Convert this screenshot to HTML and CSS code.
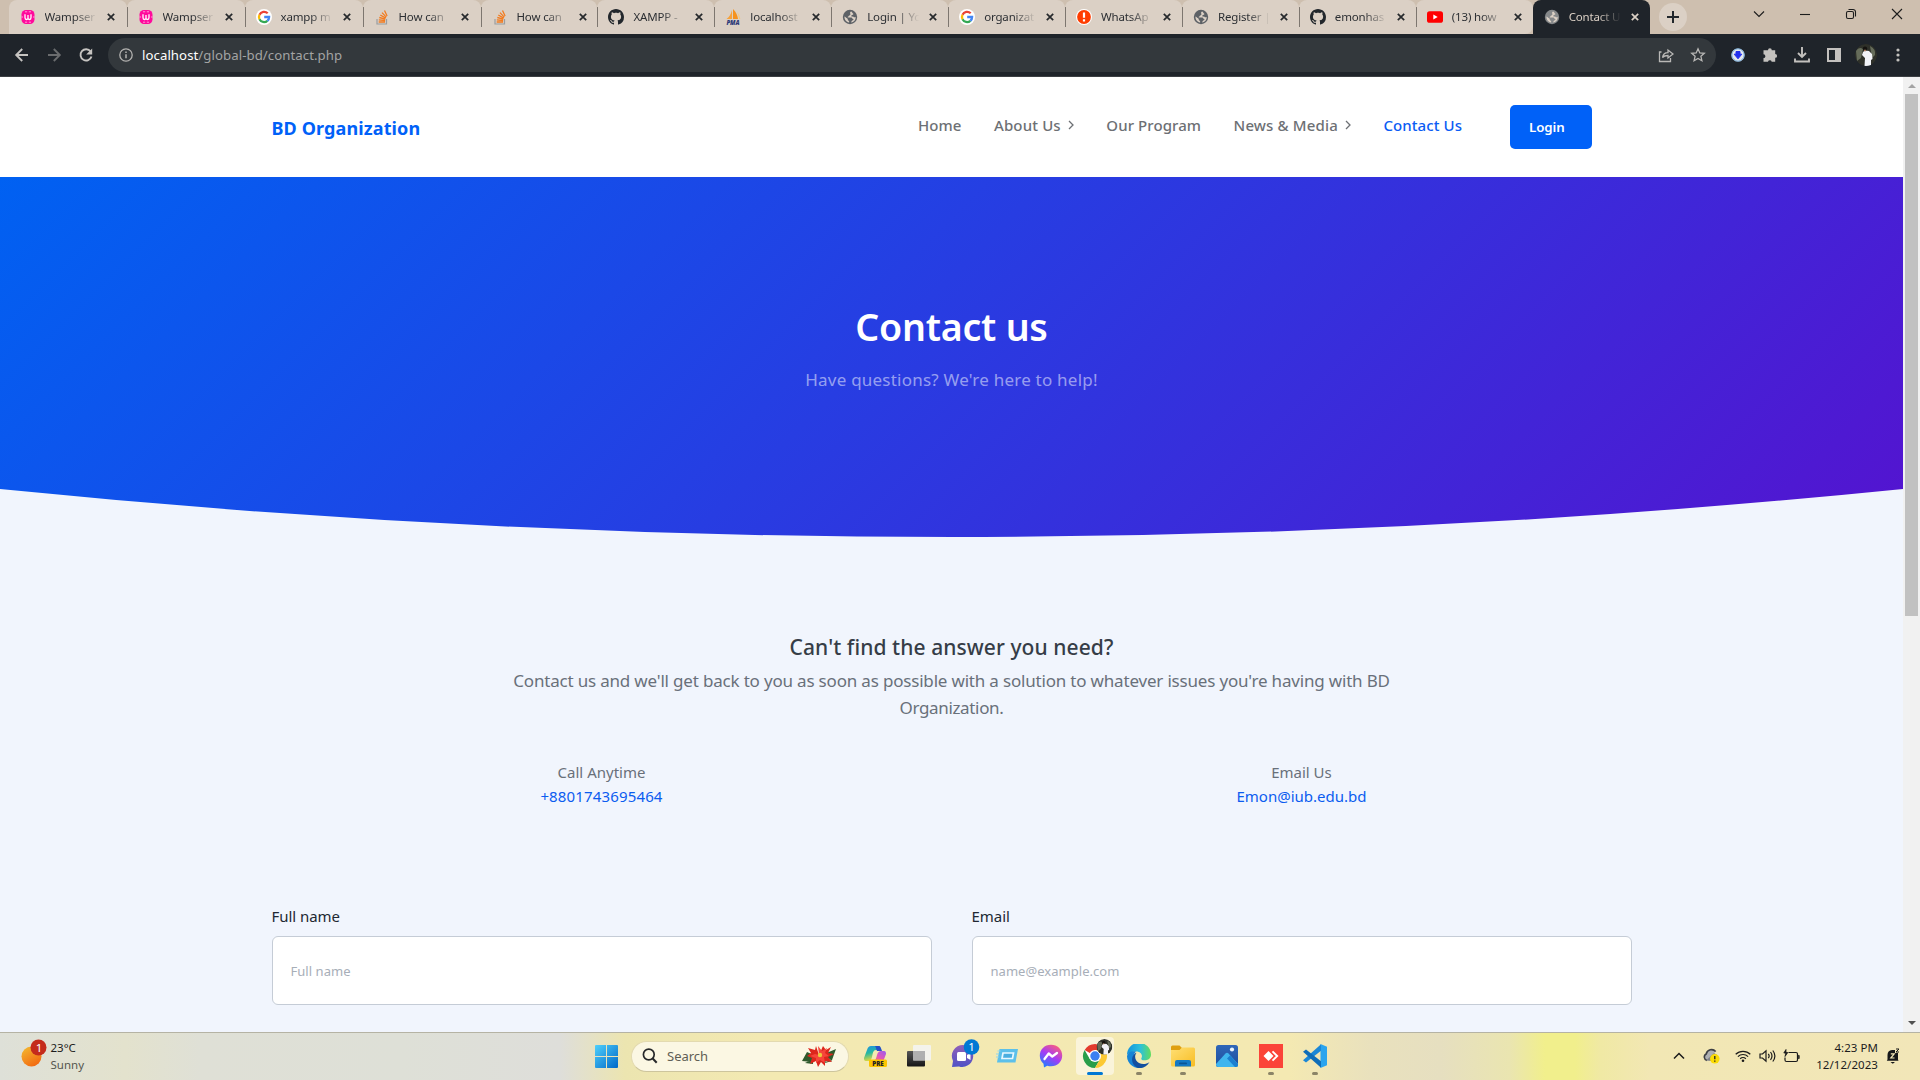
FILE: index.html
```html
<!DOCTYPE html>
<html lang="en">
<head>
<meta charset="utf-8">
<title>Contact Us</title>
<link rel="stylesheet" href="styles.css">
</head>
<body>
<svg class="defs" aria-hidden="true">
  <defs>
    <linearGradient id="gWin" x1="0" y1="0" x2="1" y2="1"><stop offset="0" stop-color="#4fd0fb"/><stop offset="1" stop-color="#0068c8"/></linearGradient>
    <linearGradient id="gSun" x1="0.2" y1="0" x2="0.8" y2="1"><stop offset="0" stop-color="#f3b62f"/><stop offset="1" stop-color="#f2640f"/></linearGradient>
    <linearGradient id="gCopA" x1="0" y1="0" x2="0.3" y2="1"><stop offset="0" stop-color="#1f8fe8"/><stop offset=".5" stop-color="#25b8a0"/><stop offset="1" stop-color="#e8d93a"/></linearGradient>
    <linearGradient id="gCopB" x1="1" y1="0" x2="0" y2="1"><stop offset="0" stop-color="#9a5cf0"/><stop offset=".5" stop-color="#e255b8"/><stop offset="1" stop-color="#f98a4a"/></linearGradient>
    <linearGradient id="gMsg" x1="0.2" y1="1" x2="0.8" y2="0"><stop offset="0" stop-color="#1a82ff"/><stop offset=".5" stop-color="#a53bf5"/><stop offset="1" stop-color="#ff5f78"/></linearGradient>
    <linearGradient id="gChat" x1="0" y1="0" x2="0" y2="1"><stop offset="0" stop-color="#9160b8"/><stop offset="1" stop-color="#4f52c6"/></linearGradient>
    <linearGradient id="gEdge" x1="0" y1="0" x2="1" y2="0"><stop offset="0" stop-color="#1392dc"/><stop offset=".55" stop-color="#2cc0dc"/><stop offset="1" stop-color="#62dd5c"/></linearGradient>
    <linearGradient id="gFold" x1="0" y1="0" x2="1" y2="1"><stop offset="0" stop-color="#ffdf74"/><stop offset="1" stop-color="#f8bd23"/></linearGradient>
    <linearGradient id="gPhoto" x1="0" y1="0" x2="0" y2="1"><stop offset="0" stop-color="#2f66b8"/><stop offset="1" stop-color="#1d4f9e"/></linearGradient>
    <linearGradient id="gDark" x1="0" y1="0" x2="0" y2="1"><stop offset="0" stop-color="#555"/><stop offset="1" stop-color="#161616"/></linearGradient>
    <clipPath id="round"><circle cx="11" cy="11" r="11"/></clipPath>

    <symbol id="wamp" viewBox="0 0 16 16"><rect x="1.500" y="1" width="13" height="14" rx="4.500" fill="#ff0a9c"/><path d="M5 5.200v3.300c0 2.600 3 2.600 3 .3V6v2.800c0 2.300 3 2.300 3-.3V5.200" fill="none" stroke="#fff" stroke-width="1.300"/><path d="M5 2.800h2.200M8.800 2.800H11M5 13.200h2.200M8.800 13.200H11M3 8H1.500M13 8h1.500" stroke="#ffc0e6" stroke-width=".8"/></symbol>
    <symbol id="google" viewBox="0 0 16 16"><circle cx="8" cy="8" r="8" fill="#fff"/><g fill="none" stroke-width="2.300"><path d="M11.700 4.300A5.100 5.100 0 0 0 3.500 5.700" stroke="#ea4335"/><path d="M3.500 5.700a5.100 5.100 0 0 0 0 4.600" stroke="#fbbc05"/><path d="M3.500 10.300a5.100 5.100 0 0 0 7.900 1.500" stroke="#34a853"/><path d="M11.400 11.800A5 5 0 0 0 13.100 8H8.200" stroke="#4285f4"/></g></symbol>
    <symbol id="stack" viewBox="0 0 16 16"><path d="M3 10v5h9.500v-5" fill="none" stroke="#9a9da0" stroke-width="1.200"/><g stroke="#f27b1f" stroke-width="1.300"><path d="M4.700 13H11M4.800 10.900l6.300.6M5.300 8.500l6 1.700M6.300 6l5.400 3.100M8 3.600l4.300 4.500M10.500 1.500l2.600 5.500"/></g></symbol>
    <symbol id="github" viewBox="0 0 16 16"><path fill="#22272c" d="M8 0C3.580 0 0 3.580 0 8c0 3.540 2.290 6.530 5.470 7.590.4.070.55-.17.55-.38 0-.19-.01-.82-.01-1.490-2.010.37-2.530-.49-2.690-.94-.09-.23-.48-.94-.82-1.130-.28-.15-.68-.52-.01-.53.63-.01 1.080.58 1.230.82.72 1.210 1.870.87 2.330.66.07-.52.28-.87.51-1.070-1.780-.2-3.640-.89-3.640-3.950 0-.87.31-1.590.82-2.150-.08-.2-.36-1.020.08-2.120 0 0 .67-.21 2.200.82.64-.18 1.320-.27 2-.27s1.360.09 2 .27c1.530-1.040 2.200-.82 2.200-.82.44 1.100.16 1.920.08 2.120.51.56.82 1.270.82 2.150 0 3.070-1.870 3.750-3.650 3.950.29.25.54.73.54 1.480 0 1.070-.01 1.930-.01 2.200 0 .21.15.46.55.38A8.010 8.010 0 0 0 16 8c0-4.420-3.580-8-8-8"/></symbol>
    <symbol id="pma" viewBox="0 0 16 16"><path d="M7 1v9H1.500C4.500 8 6 5 7 1Z" fill="#f7a13a"/><path d="M8 0c3 3 4.500 6 5 10H8Z" fill="#f6921e"/><path d="M12 3c2 2 3 4.500 3.300 7h-1.300C13.700 7 13 5 12 3Z" fill="#fbc678"/><text x="8" y="15.700" class="pma-text">PMA</text></symbol>
    <symbol id="globe" viewBox="0 0 16 16"><circle cx="8" cy="8" r="7.200" fill="currentColor"/><path class="land" d="M9.300 2.600C8.300 3 7.700 3.800 8.300 4.700c.5.700-.2 1.500-1 1.700-.7.200-.5 1-1.100 1.200-.5.300-.9.800 0 1h3.200c.9.200.8 1.200 1.600 1.400.8.100.6 1.100-.1 1.300-1.300.2-1.200 1.100-1.900 2.200C12 13.200 13.900 10.700 13.700 7.700c-.7.800-1.700.7-2.300 0-.8-.3-1.500.3-2-.4-.4-.8.500-1.400 1.300-1.500.8 0 .9-.8.3-1.200C10.200 4.200 10.300 3.100 9.300 2.600ZM2.400 7.600c-.1 2.600 1.200 4.700 3.500 5.600l1.200.2v-1.600c-1-.1-1.400-.8-1.300-1.600C5.600 9 4 9.300 3.500 8.100Z"/></symbol>
    <symbol id="alert" viewBox="0 0 16 16"><circle cx="8" cy="8" r="8" fill="#fff"/><circle cx="8" cy="8" r="6.900" fill="#ff3d00"/><path d="M8 3.500v5.200M8 10.200v2.200" stroke="#fff" stroke-width="2.200"/></symbol>
    <symbol id="youtube" viewBox="0 0 16 16"><rect x="0" y="2.200" width="16" height="11.600" rx="2.600" fill="#f00"/><path d="M6.300 5.500v5l4.400-2.500Z" fill="#fff"/></symbol>
    <symbol id="x" viewBox="0 0 8 8"><path d="m.8.8 6.400 6.400M7.200.8.8 7.200" stroke="currentColor" stroke-width="1.700"/></symbol>
    <g id="avatar" clip-path="url(#round)"><circle cx="11" cy="11" r="11" fill="#2e3029"/><path d="M1 7q3-5 7-2l-2 9-4 3ZM15 2q6 3 5 9l-3 3Z" fill="#656c5a"/><path d="M8 8 10 6.500l4 .5 3 3 .5 5-1.500 1v6H9.500L10 14l-3-3Z" fill="#f2f3f8"/><circle cx="10" cy="4.600" r="2.200" fill="#14120f"/><path d="M9 5.800h2v1.500H9Z" fill="#a9775c"/></g>
  </defs>
</svg>

<div class="tabstrip">
  <div class="tabs">
    <div class="tab"><svg class="fav"><use href="#wamp"/></svg><span class="tt">Wampser</span><svg class="cl"><use href="#x"/></svg></div>
    <div class="tab"><svg class="fav"><use href="#wamp"/></svg><span class="tt">Wampser</span><svg class="cl"><use href="#x"/></svg></div>
    <div class="tab"><svg class="fav"><use href="#google"/></svg><span class="tt">xampp m</span><svg class="cl"><use href="#x"/></svg></div>
    <div class="tab"><svg class="fav"><use href="#stack"/></svg><span class="tt">How can</span><svg class="cl"><use href="#x"/></svg></div>
    <div class="tab"><svg class="fav"><use href="#stack"/></svg><span class="tt">How can</span><svg class="cl"><use href="#x"/></svg></div>
    <div class="tab"><svg class="fav"><use href="#github"/></svg><span class="tt">XAMPP -</span><svg class="cl"><use href="#x"/></svg></div>
    <div class="tab"><svg class="fav"><use href="#pma"/></svg><span class="tt">localhost</span><svg class="cl"><use href="#x"/></svg></div>
    <div class="tab"><svg class="fav"><use href="#globe"/></svg><span class="tt">Login | Yo</span><svg class="cl"><use href="#x"/></svg></div>
    <div class="tab"><svg class="fav"><use href="#google"/></svg><span class="tt">organizat</span><svg class="cl"><use href="#x"/></svg></div>
    <div class="tab"><svg class="fav"><use href="#alert"/></svg><span class="tt">WhatsAp</span><svg class="cl"><use href="#x"/></svg></div>
    <div class="tab"><svg class="fav"><use href="#globe"/></svg><span class="tt">Register |</span><svg class="cl"><use href="#x"/></svg></div>
    <div class="tab"><svg class="fav"><use href="#github"/></svg><span class="tt">emonhas</span><svg class="cl"><use href="#x"/></svg></div>
    <div class="tab last"><svg class="fav"><use href="#youtube"/></svg><span class="tt">(13) how</span><svg class="cl"><use href="#x"/></svg></div>
    <div class="tab active"><svg class="fav"><use href="#globe"/></svg><span class="tt">Contact U</span><svg class="cl"><use href="#x"/></svg></div>
  </div>
  <div class="newtab"><svg width="12" height="12" viewBox="0 0 12 12"><path d="M6 0v12M0 6h12" stroke="#22272c" stroke-width="2"/></svg></div>
  <div class="winctl">
    <svg viewBox="0 0 12 12"><path d="m1 3.500 5 5 5-5"/></svg>
    <svg viewBox="0 0 12 12"><path d="M1 6.500h10"/></svg>
    <svg viewBox="0 0 12 12"><rect x="1.500" y="3.500" width="7" height="7" rx="1.500"/><path d="M3.500 1.500h4.500a2.500 2.500 0 0 1 2.500 2.500v4.500"/></svg>
    <svg viewBox="0 0 12 12"><path d="m1 1 10 10M11 1 1 11"/></svg>
  </div>
</div>

<div class="toolbar">
  <div class="navicons">
    <svg viewBox="0 0 16 16"><path d="M14 8H3M8.200 2 2.200 8l6 6" stroke="#c6c4c1"/></svg>
    <svg viewBox="0 0 16 16"><path d="M2 8h11M7.800 2l6 6-6 6" stroke="#6a6c6e"/></svg>
    <svg viewBox="0 0 16 16"><path d="M12.600 4.500A5.600 5.600 0 1 0 13.500 9.500" stroke="#c6c4c1"/><path d="M14.200 1.500v6h-6Z" fill="#c6c4c1"/></svg>
  </div>
  <div class="omnibox">
    <svg class="info" viewBox="0 0 14 14"><circle cx="7" cy="7" r="6.200" fill="none" stroke="#b4b3b1" stroke-width="1.300"/><path d="M7 6.200v4M7 3.500v1.500" stroke="#b4b3b1" stroke-width="1.500"/></svg>
    <span class="url"><b>localhost</b>/global-bd/contact.php</span>
    <svg class="oi" viewBox="0 0 16 16"><path d="M3.500 5H1.500v9.500h11V11M4.500 10.500c.6-3.300 2.700-4.800 5.500-4.800V3L15 7l-5 4V8.500c-2.500 0-4.200.4-5.500 2Z"/></svg>
    <svg class="oi" viewBox="0 0 16 16"><path d="m8 1.800 1.800 4.100 4.500.4-3.400 3 1 4.400L8 11.400l-3.900 2.300 1-4.400-3.400-3 4.500-.4Z"/></svg>
  </div>
  <div class="exts">
    <svg viewBox="0 0 16 16"><circle cx="8" cy="8" r="6.600" fill="#e6e9ee"/><circle cx="8" cy="8" r="6.200" fill="none" stroke="#6fa8d8" stroke-width="1"/><path d="M6 4.500h4v2.700h1.800L8 11.800 4.200 7.200H6Z" fill="#2330ee" stroke="#2330ee"/></svg>
    <svg viewBox="0 0 16 16"><path d="M6 3.200a1.900 1.900 0 0 1 3.800 0h3.400V7a1.900 1.900 0 0 1 0 3.800v4H9.700a1.900 1.900 0 0 0-3.700 0H1.500v-3.700a1.900 1.900 0 0 0 0-3.800V3.200Z" fill="#c3c1be"/></svg>
    <svg viewBox="0 0 16 16"><path d="M8 0v9M4 6l4 4 4-4M1 11.500v3h14v-3" fill="none" stroke="#c3c1be" stroke-width="1.900"/></svg>
    <svg viewBox="0 0 16 16"><path fill-rule="evenodd" d="M1 1h14v14H1ZM3 3v10h6V3Z" fill="#c3c1be"/></svg>
    <svg class="ava" viewBox="0 0 22 22"><use href="#avatar"/></svg>
    <svg viewBox="0 0 16 16"><g fill="#c3c1be"><circle cx="8" cy="3" r="1.600"/><circle cx="8" cy="8" r="1.600"/><circle cx="8" cy="13" r="1.600"/></g></svg>
  </div>
</div>

<div class="viewport">
  <main class="page">
    <nav class="navbar">
      <div class="brand">BD Organization</div>
      <div class="links">
        <span class="l1">Home</span>
        <span class="l2">About Us <svg class="chev" viewBox="0 0 6 10"><path d="m1 1 4 4-4 4"/></svg></span>
        <span class="l3">Our Program</span>
        <span class="l4">News &amp; Media <svg class="chev" viewBox="0 0 6 10"><path d="m1 1 4 4-4 4"/></svg></span>
        <span class="l5">Contact Us</span>
      </div>
      <div class="login">Login</div>
    </nav>
    <header class="hero">
      <h1>Contact us</h1>
      <p>Have questions? We're here to help!</p>
      <svg class="curve" viewBox="0 0 1903 48" preserveAspectRatio="none"><path d="M0 0Q475 48 951.500 48T1903 0V48H0Z"/></svg>
    </header>
    <section class="contact">
      <h2>Can't find the answer you need?</h2>
      <p class="lead">Contact us and we'll get back to you as soon as possible with a solution to whatever issues you're having with BD<br><span>Organization.</span></p>
      <div class="cols ways">
        <div>Call Anytime<br><a class="phone">+8801743695464</a></div>
        <div>Email Us<br><a>Emon@iub.edu.bd</a></div>
      </div>
      <div class="cols form">
        <label>Full name<input type="text" placeholder="Full name"></label>
        <label>Email<input type="text" placeholder="name@example.com"></label>
      </div>
    </section>
  </main>
  <div class="scroll"><i class="up"></i><div class="thumb"></div><i class="down"></i></div>
</div>

<footer class="taskbar">
  <div class="weather">
    <svg width="28" height="30" viewBox="0 0 28 30"><circle cx="10.500" cy="17.500" r="10" fill="url(#gSun)"/><circle cx="17.500" cy="8.500" r="8" fill="#c42b1c"/><text x="18" y="12.500" class="badge-text">1</text></svg>
    <div>23°C<br><span>Sunny</span></div>
  </div>
  <svg class="start" viewBox="0 0 23 23"><path fill="url(#gWin)" d="M0 1Q0 0 1 0h10v11H0ZM12 0h10q1 0 1 1v10H12ZM0 12h11v11H1q-1 0-1-1ZM12 12h11v10q0 1-1 1H12Z"/></svg>
  <div class="search">
    <svg width="16" height="16" viewBox="0 0 16 16"><circle cx="6.800" cy="6.500" r="5.400" fill="none" stroke="#26282a" stroke-width="1.700"/><path d="m10.700 10.500 4 4.300" stroke="#26282a" stroke-width="2"/></svg>
    <span>Search</span>
    <svg class="flower" width="36" height="24" viewBox="0 0 36 24"><path d="M1 17 6 8l9 4-4 6ZM35 5l-4 11-7 2-1-8ZM12 20l-8-1 8-4ZM24 19l7-2-5-4Z" fill="#2f5a2c"/><path d="m18 11-3-9-1 4-7-2 3 5-4 3 5 2-2 6 6-3 2 6 3-5 4 4v-5l7 1-4-5 6-3-6-1 3-6-5 3-3-4Z" fill="#dd261c"/><path d="m18 11-1-9 4 5 5-3-2 5 4 3-5 1 1 6-5-3-4 3v-5l-6-2 5-2Z" fill="#f5453a"/><circle cx="19" cy="11" r="2.200" fill="#ecc93b"/></svg>
  </div>
  <div class="apps">
    <div><svg viewBox="0 0 24 24"><path d="M8 2h7c2 0 2 1 3 4h-5c-3 0-3 3-4 7s-2 4-4 4H3c-2 0-2-2-2-3L4 6c1-3 2-4 4-4Z" fill="url(#gCopA)"/><path d="M12 2h4c1.500 0 2 2 3 5h-5c-1-2-1-4-2-5Z" fill="#2350c8"/><path d="M18 7h3c2 0 2 2 2 3l-3 8H8c4 0 5-3 6-7 1-3 2-4 4-4Z" fill="url(#gCopB)"/><rect x="6" y="15.500" width="18" height="7.500" rx="1.500" fill="#fdc500"/><text x="15" y="22" class="pre-text">PRE</text></svg></div>
    <div><svg viewBox="0 0 24 24"><rect x="0" y="7" width="18" height="15.500" rx="1" fill="url(#gDark)"/><rect x="6" y="1" width="18" height="15.500" rx="1" fill="#f4f4f4" opacity=".88"/><rect x="6" y="7" width="12" height="9.500" fill="#a4a4a4" opacity=".8"/></svg></div>
    <div><svg viewBox="0 0 24 24" overflow="visible"><path d="M12 1a11 11 0 1 1-4 21.500L1 23l1-6A11 11 0 0 1 12 1Z" fill="url(#gChat)"/><rect x="6" y="8" width="9" height="9" rx="1.500" fill="#fff"/><path d="m16 11 3.500-2v7L16 14Z" fill="#fff"/><circle cx="20.500" cy="3" r="7.800" fill="#0078d4"/><text x="20.500" y="7" class="badge-text">1</text></svg></div>
    <div><svg viewBox="0 0 24 24"><path d="M4.500 5H23l-2.500 13.500H2Z" fill="#5cc0ea"/><path d="M8 9h10.500l-1 5.500H7Z" fill="#4aaee0" stroke="#e8f8ff" stroke-width="1.700"/><path d="M2.500 7h3M1 10h3M1 13h3" stroke="#8fd4ef"/></svg></div>
    <div><svg viewBox="0 0 24 24"><path d="M12 .8C5.500.8.800 5.500.800 11.800c0 3.300 1.400 6 3.700 8L5 23.500l3.200-1.700c1.200.4 2.500.5 3.800.5 6.500 0 11.200-4.600 11.200-10.700S18.500.8 12 .8Z" fill="url(#gMsg)"/><path d="m5.500 15 4.200-5.500 3.600 3L18 9" fill="none" stroke="#fff" stroke-width="2.300" stroke-linejoin="round" stroke-linecap="round"/></svg></div>
    <div class="tile open"><svg viewBox="0 0 24 24" overflow="visible"><circle cx="12" cy="12" r="12" fill="#fff"/><path d="M12 12 1.600 6A12 12 0 0 1 22.400 6H12Z" fill="#e33b2e"/><path d="M1.600 6A12 12 0 0 0 12 24l5.200-9L12 12 6.800 15Z" fill="#2a9e4a"/><path d="M22.400 6A12 12 0 0 1 12 24l5.200-9V9l-5-3Z" fill="#fcc934"/><circle cx="12" cy="12" r="6" fill="#fff"/><circle cx="12" cy="12" r="4.700" fill="#3b7ff0"/><use href="#avatar" transform="translate(13.500 -5) scale(.72)"/></svg></div>
    <div class="run"><svg viewBox="0 0 24 24"><path d="M0 11A12 12 0 0 1 24 10.500c0 4-3 5.800-6.500 5.800-3 0-3.700-1.300-3-2.400C16 11 13.500 7.500 9.500 7.500 4.500 7.500 1 9.500 0 11Z" fill="url(#gEdge)"/><path d="M0 12C1 8 5 6.800 9 7.500c-2 2-3 5-2 8.500 1.300 4.200 5 6.300 9 7.400A12 12 0 0 1 0 12Z" fill="#1684d6"/><path d="M9.500 8.800C7 12 8 17 12 19c3.500 1.800 7.500 1.200 10.500-1C20 22.500 15.500 24.500 11.500 24 6.500 22.500 4 17 5.500 13c.8-2.200 2.300-3.700 4-4.200Z" fill="#124f9f"/></svg></div>
    <div class="run"><svg viewBox="0 0 24 24"><path d="M0 3q0-1.500 1.500-1.500h7L11 4v4H0Z" fill="#dfa00f"/><path d="M0 6h8.500L11 3.500h11.500Q24 3.500 24 5v16q0 1.500-1.500 1.500h-21Q0 22.500 0 21Z" fill="url(#gFold)"/><path d="M4 18q0-2 2-2h12q2 0 2 2v4.500H4Z" fill="#1579c4"/><rect x="8" y="18.500" width="8" height="1.800" rx=".9" fill="#0b5596"/></svg></div>
    <div><svg viewBox="0 0 24 24"><rect x="1" y="1" width="22" height="22" rx="2.500" fill="url(#gPhoto)"/><path d="M1 20 10.500 9.500q1.500-1.500 3 0L23 20v.5q0 2.500-2.500 2.500h-17Q1 23 1 20.500Z" fill="#3fb5ee"/><path d="m12 14.500 3-3L23 20v.5q0 2.500-2.500 2.500h-.5Z" fill="#1b7fd0"/><circle cx="17" cy="5.500" r="2.100" fill="#e9f3fc"/></svg></div>
    <div class="run"><svg viewBox="0 0 24 24"><path fill="#fb4438" d="M0 0h24v24H0Z"/><path d="m9.500 7 5 5-5 5-5-5Z" fill="#fff"/><path d="m13.500 7.300 4.700 4.700-4.700 4.700" fill="none" stroke="#fff" stroke-width="1.900"/></svg></div>
    <div class="run"><svg viewBox="0 0 24 24"><path d="M17.500 0 24 2.800v18.400L17.500 24Z" fill="#2aa4ee"/><path d="M18 .2v6.500L3 18.500 0 16.200Z" fill="#1b87d6"/><path d="M18 23.800v-6.500L3 5.500 0 7.800Z" fill="#0f6db8"/></svg></div>
  </div>
  <div class="tray">
    <svg class="t1" viewBox="0 0 12 12"><path d="m1 8.500 5-5 5 5" stroke-width="1.500"/></svg>
    <svg class="t2" viewBox="0 0 18 16"><path d="M5 12.500a3.500 3.500 0 0 1-.8-6.500 5.500 5.500 0 0 1 9.500-2.500" fill="#aeb0b4" stroke="#3c3e42" stroke-width="1.600"/><path d="M4 12.500 12 5l3 2-5 6Z" fill="#7e8188" stroke="none"/><circle cx="12.800" cy="10.800" r="4.800" fill="#fbdc05" stroke="none"/><path d="M12.800 8v3.300M12.800 12.500v1.200" stroke="#222" stroke-width="1.300"/></svg>
    <svg class="t3" viewBox="0 0 16 12"><path d="M.7 4.300a10.500 10.500 0 0 1 14.600 0M2.900 6.600a7.300 7.300 0 0 1 10.200 0M5.200 8.800a4 4 0 0 1 5.600 0"/><circle cx="8" cy="10.700" r="1.300" fill="#1b1b1b" stroke="none"/></svg>
    <svg class="t4" viewBox="0 0 17 14"><path d="M1 5h2.500L7 1.800v10.400L3.500 9H1ZM9.300 4.800q1.700 2.200 0 4.400M11.500 3q3 4 0 8M13.800 1.500q4.200 5.500 0 11"/></svg>
    <svg class="t5" viewBox="0 0 17 14"><path d="M5.500 3.500h7.500q1.500 0 1.500 1.500v6q0 1.500-1.500 1.500H3.500Q2 12.500 2 11V8.500"/><path d="M15.200 6.500h1v3h-1M3 .5.800 4h2L2 7.500 4.800 3.500H3Z" fill="#1b1b1b" stroke-width=".8"/></svg>
    <div class="clock">4:23 PM<br>12/12/2023</div>
    <svg class="t6" viewBox="0 0 14 16"><path d="M1.500 11.500V7q0-4.500 4.500-5h3V5h3v6.500l.5 1.300H.8ZM4.500 14h4.500l-2.200 1.800Z" fill="#17181a" stroke="none"/><path d="M4.800 5.800h3.400L4.800 10h3.700" stroke="#f3e7b8" stroke-width="1.200"/><path d="M10 1h3L10 4h3" stroke-width="1"/></svg>
  </div>
</footer>
</body>
</html>
```
FILE: styles.css
```css
* { box-sizing: border-box; }
body {
  margin: 0;
  width: 1920px;
  height: 1080px;
  overflow: hidden;
  display: flex;
  flex-direction: column;
  font-family: "Noto Sans", "Open Sans", sans-serif;
}
.defs { position: absolute; width: 0; height: 0; }
svg { flex: none; display: block; }

/* Browser tabs */
.tabstrip { height: 34px; flex: none; display: flex; background: #cebfaf; }
.tabs { display: flex; padding-left: 8.500px; }
.tab {
  width: 116.920px;
  height: 34px;
  display: flex;
  align-items: center;
  padding-left: 11px;
  background: linear-gradient(#7d766f, #7d766f) 0 7px / 1px 20px no-repeat #dbd0c5;
  border-radius: 8px 8px 0 0;
  color: #2c2f33;
}
.tab:nth-child(-n+4) { width: 118px; }
.tab:first-child { background: #dbd0c5; }
.tab.last { border-radius: 8px 8px 8px 0; }
.fav { width: 16px; height: 16px; color: #5d6166; }
.land { fill: #dbd0c5; }
.tt {
  width: 58px;
  margin-left: 9px;
  white-space: pre;
  font-size: 11.500px;
  line-height: 34px;
  letter-spacing: -0.150px;
  -webkit-mask-image: linear-gradient(90deg, #000 50%, transparent 90%);
  mask-image: linear-gradient(90deg, #000 50%, transparent 90%);
}
.cl { width: 8px; height: 8px; margin-left: 4px; color: #26292c; }
.tab.active { background: #1f242a; color: #dbd0c5; }
.active .fav { color: #85888a; }
.active .cl { color: #dbd0c5; }
.newtab {
  width: 28px;
  height: 28px;
  margin: 3px 0 0 9px;
  border-radius: 50%;
  background: #dbd0c5;
  display: flex;
  align-items: center;
  justify-content: center;
}
.winctl { margin: 8px 17px 0 auto; display: flex; gap: 34px; }
.winctl svg { width: 12px; height: 12px; fill: none; stroke: #1c1c1c; stroke-width: 1.100; }
.pma-text { font: italic 800 6px "Open Sans", sans-serif; fill: #2e3a78; text-anchor: middle; }

/* Toolbar */
.toolbar {
  height: 43px;
  flex: none;
  display: flex;
  align-items: center;
  padding: 0 12px 1px 13.500px;
  background: #1f242a;
  border-bottom: 1px solid #3c3f43;
}
.navicons { display: flex; gap: 16px; width: 94.500px; }
.navicons svg { width: 16px; height: 16px; fill: none; stroke-width: 1.900; }
.omnibox {
  width: 1608px;
  height: 34px;
  border-radius: 17px;
  background: #33383c;
  display: flex;
  align-items: center;
  padding: 0 10px 0 11px;
}
.info { width: 14px; height: 14px; }
.url { margin: 0 auto 0 9px; font-size: 13.200px; line-height: 34px; color: #a3a4a4; letter-spacing: 0.070px; }
.url b { font-weight: 400; color: #fff; }
.oi { width: 16px; height: 16px; margin-left: 16px; fill: none; stroke: #b9b8b6; stroke-width: 1.300; }
.exts { display: flex; align-items: center; margin-left: 14px; gap: 16px; }
.exts svg { width: 16px; height: 16px; }
.exts .ava { width: 22px; height: 22px; margin: 0 -3px; }

/* Page */
.viewport { height: 955px; flex: none; display: flex; }
.page { width: 1903px; background: #f1f5fd; overflow: hidden; }
.navbar { height: 100px; background: #fff; display: flex; align-items: flex-start; padding: 0 311px 0 271.500px; }
.brand { margin-top: 39px; font-size: 18px; font-weight: 700; line-height: 24px; color: #0061f8; letter-spacing: 0.120px; white-space: nowrap; }
.links {
  display: flex;
  margin: 36px 48px 0 auto;
  font-size: 15px;
  font-weight: 500;
  line-height: 24px;
  color: #6d7074;
  white-space: nowrap;
  gap: 32.500px;
  letter-spacing: 0.080px;
}
.links span { display: flex; align-items: center; gap: 7px; }
.links .l2, .links .l4 { letter-spacing: 0.150px; }
.links .l5 { color: #0b5cf4; }
.chev { width: 6px; height: 10px; fill: none; stroke: #6d7074; stroke-width: 1.300; margin-top: -1px; }
.login {
  width: 82px;
  height: 44px;
  margin-top: 28px;
  padding-left: 19px;
  border-radius: 5px;
  background: #0061f8;
  color: #fff;
  font-size: 13.300px;
  font-weight: 600;
  line-height: 44px;
  letter-spacing: -0.100px;
}
.hero {
  height: 360px;
  display: flex;
  flex-direction: column;
  align-items: center;
  padding-top: 126px;
  background: linear-gradient(135deg, #0061f2 0%, rgba(105, 0, 199, 0.8) 100%) #0061f2;
  color: #fff;
}
h1 { margin: 0; font-size: 37.600px; font-weight: 600; line-height: 48px; letter-spacing: -0.250px; }
.hero p { margin: 15px 0 0; font-size: 17px; line-height: 28px; letter-spacing: 0.220px; color: rgba(255, 255, 255, 0.52); }
.curve { width: 1903px; height: 48px; margin-top: auto; fill: #f1f5fd; }
.contact { padding: 96px 271.500px 0; color: #69707a; font-size: 15px; line-height: 24px; }
h2 { margin: 0; text-align: center; font-size: 21px; font-weight: 500; line-height: 28px; letter-spacing: 0.080px; color: #363d47; }
.lead { margin: 6px 0 0; text-align: center; font-size: 17px; line-height: 27px; letter-spacing: -0.185px; white-space: nowrap; }
.lead span { letter-spacing: -0.340px; }
.cols { display: grid; grid-template-columns: 1fr 1fr; gap: 40px; }
.ways { margin-top: 39px; text-align: center; }
.ways a { color: #0b5cf0; }
.ways .phone { letter-spacing: 0.150px; }
.form { margin-top: 96px; }
label { display: block; color: #212832; letter-spacing: -0.050px; }
input {
  display: block;
  width: 100%;
  height: 69px;
  margin-top: 8px;
  padding: 1px 18px 0;
  border: 1px solid #c5ccd6;
  border-radius: 6px;
  background: #fff;
  font: 13px "Noto Sans", sans-serif;
  letter-spacing: 0.040px;
}
input::placeholder { color: #a7aeb8; opacity: 1; }

.scroll { width: 17px; background: #f1f1f1; display: flex; flex-direction: column; align-items: center; }
.thumb { width: 13px; height: 522px; background: #c1c1c1; margin-top: 7px; }
.up { width: 0; height: 0; border: 4px solid transparent; border-top: 0; border-bottom-color: #a3a3a3; margin-top: 7px; margin-bottom: -1px; }
.down { width: 0; height: 0; border: 4px solid transparent; border-bottom: 0; border-top-color: #505050; margin: auto 0 7px; }

/* Taskbar */
.taskbar {
  height: 48px;
  flex: none;
  display: flex;
  align-items: center;
  border-top: 1px solid #b5b3a4;
  background: linear-gradient(90deg, #dee0d8 0, #e3e2cd 125px, #dfe0d6 200px, #dee0d7 400px, #dededa 560px, #ece5b0 625px, #f3e9b2 760px, #f4e9b2 1290px, #e9e1bd 1370px, #e6dfc0 1440px, #eae5b0 1510px, #f1ef8c 1545px, #f1ef8c 1575px, #f0e9a4 1600px, #f2e7b4 1650px, #f2e6b8 1920px);
  color: #1c1c1c;
}
.weather { width: 594.500px; padding-left: 20.500px; display: flex; font-size: 11.500px; line-height: 16.200px; }
.weather svg { margin: -1px 2px 0 0; }
.weather span { color: #55564f; }
.badge-text { font: 11.500px "Noto Sans", sans-serif; fill: #fff; text-anchor: middle; }
.pre-text { font: 800 6.200px "Open Sans", sans-serif; fill: #222; text-anchor: middle; }
.start { width: 23px; height: 23px; }
.search {
  width: 218px;
  height: 31px;
  margin: -1px 0 0 13.500px;
  padding: 0 11px 0 10px;
  border-radius: 16px;
  background: #fbf7e3;
  border: 1px solid #e3dab0;
  border-bottom-color: #cdc59d;
  display: flex;
  align-items: center;
  font-size: 13px;
  color: #5f5e55;
}
.search span { margin: 0 auto 0 9px; }
.apps { display: flex; margin: -1px 0 0 3.500px; }
.apps div {
  width: 38px;
  height: 38px;
  margin: 0 3px;
  border-radius: 4px;
  display: flex;
  flex-direction: column;
  align-items: center;
  padding-top: 7px;
}
.apps svg { width: 24px; height: 24px; }
.apps .tile { background: #faf4da; }
.apps .run::after, .apps .open::after { content: ""; width: 6px; height: 3px; margin-top: 4px; border-radius: 2px; background: #8b8467; }
.apps .open::after { width: 16px; background: #0078d4; }
.tray { margin-left: auto; display: flex; align-items: center; padding-right: 20px; }
.tray svg { fill: none; stroke: #1b1b1b; stroke-width: 1.200; margin-top: -1px; }
.tray .t1 { width: 12px; height: 12px; margin-right: 17px; }
.tray .t2 { width: 18px; height: 16px; margin-right: 15px; }
.tray .t3 { width: 16px; height: 12px; margin-right: 8px; }
.tray .t4 { width: 17px; height: 14px; margin-right: 7px; }
.tray .t5 { width: 17px; height: 14px; margin-right: 16px; }
.tray .t6 { width: 14px; height: 16px; margin-left: 8px; }
.clock { text-align: right; font-size: 11.500px; line-height: 16.200px; letter-spacing: 0.060px; }
```
